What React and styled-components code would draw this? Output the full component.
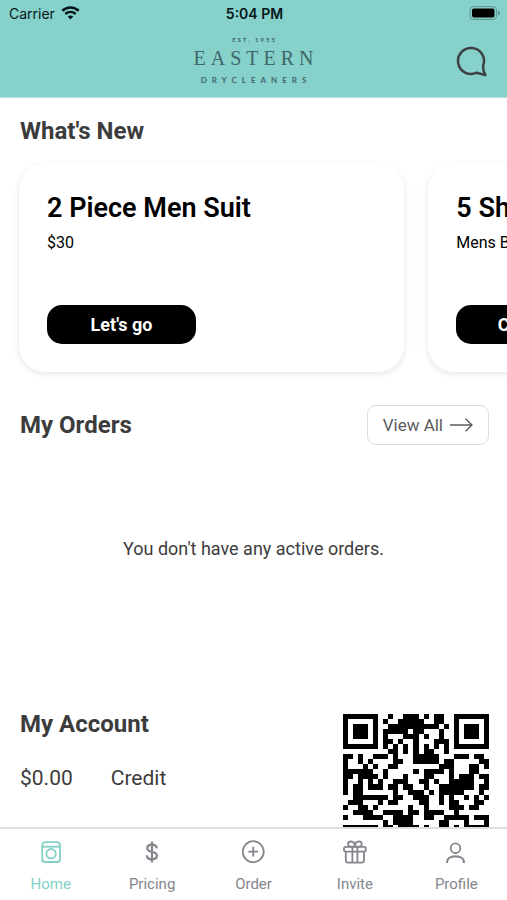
import React from "react";
import styled, { createGlobalStyle } from "styled-components";

const GlobalStyle = createGlobalStyle`
  * {
    box-sizing: border-box;
  }
  body {
    margin: 0;
    background-color: #ffffff;
    font-family: Roboto, "Liberation Sans", sans-serif;
  }
  h1, h2, h3, p {
    margin: 0;
  }
  button {
    font-family: inherit;
    cursor: pointer;
  }
`;

const Screen = styled.div`
  display: flex;
  flex-direction: column;
  height: 100vh;
  overflow: hidden;
`;

const Header = styled.header`
  background-color: #86d1ca;
  border-bottom: 1px solid #b5dfdb;
`;
const StatusBar = styled.div`
  display: grid;
  grid-template-columns: 1fr auto 1fr;
  align-items: center;
  height: 26px;
  padding: 0 7px 0 9px;
  color: #06161a;
  font-family: Inter, "Liberation Sans", sans-serif;
  font-size: 14px;
`;
const Carrier = styled.div`
  display: flex;
  align-items: center;
  gap: 6px;
`;
const Time = styled.div`
  font-weight: 600;
`;
const Battery = styled.svg`
  justify-self: end;
`;
const TitleBar = styled.div`
  display: grid;
  grid-template-columns: 1fr auto 1fr;
  align-items: center;
  height: 71px;
  padding: 0 20px;
`;
const Logo = styled.h1`
  grid-column: 2;
  display: flex;
  flex-direction: column;
  align-items: center;
  color: #3f6668;
  font-weight: normal;
`;
const LogoLine = styled.span`
  font-family: ${({ $serif }) =>
    $serif ? '"Liberation Serif", serif' : "Lato, sans-serif"};
  font-size: ${({ $size }) => $size}px;
  font-weight: ${({ $serif }) => ($serif ? 400 : 700)};
  line-height: ${({ $line }) => $line}px;
  letter-spacing: ${({ $tracking }) => $tracking}px;
  padding-left: ${({ $tracking }) => $tracking}px;
`;
const ChatButton = styled.button`
  justify-self: end;
  display: flex;
  padding: 0;
  border: none;
  background: none;
  color: #3d4145;
`;

const Content = styled.main`
  flex: 1;
  min-height: 0;
  overflow: hidden auto;
  scrollbar-width: none;
  color: #3c3c3c;
`;
const SectionTitle = styled.h2`
  font-size: 24px;
  line-height: 28px;
  font-weight: 700;
`;
const NewsSection = styled.section`
  padding-top: 19px;

  & > ${SectionTitle} {
    padding: 0 20px;
  }
`;
const CardList = styled.div`
  display: flex;
  gap: 24px;
  padding: 19px 19px 33px;
  overflow-x: auto;
  scrollbar-width: none;
`;
const Card = styled.article`
  flex: 0 0 76vw;
  display: flex;
  flex-direction: column;
  align-items: flex-start;
  height: 208px;
  padding: 28px;
  border-radius: 26px;
  background-color: #ffffff;
  box-shadow: 0 2px 6px rgba(0, 0, 0, 0.1);
  color: #000000;
`;
const CardTitle = styled.h3`
  font-size: 27px;
  line-height: 32px;
  font-weight: 600;
`;
const CardText = styled.p`
  margin-top: 9px;
  font-size: 16px;
  line-height: 20px;
`;
const CardButton = styled.button`
  width: 149px;
  height: 39px;
  margin-top: auto;
  border: none;
  border-radius: 15px;
  background-color: #000000;
  color: #ffffff;
  font-size: 18px;
  font-weight: 700;
`;

const OrdersHeader = styled.div`
  display: flex;
  align-items: center;
  justify-content: space-between;
  padding: 0 18px 0 20px;
`;
const ViewAllButton = styled.button`
  display: flex;
  align-items: center;
  gap: 7px;
  height: 40px;
  padding: 0 15px;
  border: 1px solid #dcdcdc;
  border-radius: 9px;
  background-color: #ffffff;
  color: #5c5c5c;
  font-size: 17px;
`;
const EmptyOrders = styled.p`
  padding: 92px 20px 149px;
  font-size: 18px;
  line-height: 24px;
  text-align: center;
`;

const AccountSection = styled.section`
  display: flex;
  align-items: flex-start;
  justify-content: space-between;
  padding: 0 18px 24px 20px;
`;
const Balance = styled.div`
  display: flex;
  gap: 38px;
  margin-top: 28px;
  font-size: 21px;
  line-height: 24px;
`;
const QrBox = styled.div`
  display: flex;
  padding-top: 4px;
`;

const TabBar = styled.nav`
  display: flex;
  height: 73px;
  border-top: 2px solid #dedede;
  background-color: #ffffff;
`;
const Tab = styled.a`
  flex: 1;
  display: flex;
  flex-direction: column;
  align-items: center;
  gap: 10px;
  padding-top: 10px;
  color: ${({ $active }) => ($active ? "#83d0c7" : "#85858d")};
  font-size: 15px;
  line-height: 18px;
  text-decoration: none;
`;

const qrRows = [
  "1111111..1..111.1.11..1111111",
  "1.....1.1..11111..11..1.....1",
  "1.111.1..1111111111.1.1.111.1",
  "1.111.1.11111.11...1..1.111.1",
  "1.111.1.1...111.1..1..1.111.1",
  "1.....1.11.1..1...111.1.....1",
  "1111111.1.1.1.1.1.1.1.1111111",
  ".........11.1.1.11..1........",
  "11.1..111.1...11111...111.11.",
  "1..1.1....11..11111.11.....11",
  "1...1.1..11........111...11.1",
  "111111..1.....1.1111.1...11..",
  "11.1111.1...1...11...1.111.11",
  "1..1.1.1..111..11.1..11111..1",
  "1.11.111.11.11..1..1111111.11",
  "1.11......1..111.1.11111...1.",
  "..1111111.11..111..1.1..1.1.1",
  ".111...1.11....11..1.11...11.",
  "1..11.1......1..1....111.11..",
  "..1111..1111.11.1111..1......",
  "1...1111..1111..11..11111.111",
  "........1.1111.....11...1...1",
  "1111111.11.1111.1..11.1.11111",
];

const QrCode = () => (
  <svg
    width="146"
    height="146"
    viewBox="0 0 29 29"
    shapeRendering="crispEdges"
    role="img"
    aria-label="Account QR code"
  >
    {qrRows.map((row, y) =>
      [...row].map((cell, x) =>
        cell === "1" ? (
          <rect key={`${x}-${y}`} x={x} y={y} width="1" height="1" />
        ) : null
      )
    )}
  </svg>
);

const WifiIcon = () => (
  <svg width="19" height="14" viewBox="0 0 19 14" fill="none" stroke="#06161a">
    <path d="M1.3 4.8C6 .4 13 .4 17.7 4.8" strokeWidth="2.6" />
    <path d="M4.3 8C7.3 5.2 11.7 5.2 14.7 8" strokeWidth="2.4" />
    <path d="M9.5 13.4L6.7 10.5C8.3 9.1 10.7 9.1 12.3 10.5Z" fill="#06161a" stroke="none" />
  </svg>
);

const BatteryIcon = () => (
  <Battery width="31" height="14" viewBox="0 0 31 14">
    <rect x="1" y=".6" width="26.5" height="12.8" rx="3.6" fill="none" stroke="#5b918d" />
    <rect x="3" y="2.6" width="22.5" height="8.8" rx="1.8" />
    <path d="M29 4.6Q31 5.6 31 7T29 9.4Z" fill="#5b918d" />
  </Battery>
);

const ChatIcon = () => (
  <svg
    width="31"
    height="31"
    viewBox="0 0 31 31"
    fill="none"
    stroke="currentColor"
    strokeWidth="2.5"
    strokeLinejoin="round"
  >
    <path d="M27.2 19.5A13 13 0 1 0 20.6 26.7L29.3 29.1Q26.7 24.5 27.2 19.5Z" />
  </svg>
);

const ArrowIcon = () => (
  <svg width="23" height="14" viewBox="0 0 23 14" fill="none" stroke="currentColor" strokeWidth="1.3">
    <path d="M0 7H22M15.5 .7L22 7L15.5 13.3" />
  </svg>
);

const iconPaths = {
  home: (
    <>
      <rect x="3.2" y="2.2" width="17.8" height="19.8" rx="3" />
      <path d="M3.2 6.7H21" />
      <circle cx="12.1" cy="13.7" r="4.7" />
    </>
  ),
  pricing: (
    <path
      d="M12 1.5V22.5M16.8 8.4C16.7 5.9 14.8 4.6 12 4.6S7.2 6 7.2 8.2C7.2 13.3 16.9 10.2 16.9 15.6C16.9 18 14.9 19.4 12 19.4S6.9 18 6.9 15.3"
      strokeWidth="2.2"
    />
  ),
  order: (
    <>
      <circle cx="11.2" cy="11.7" r="10.5" />
      <path d="M11.2 6.8V16.6M6.3 11.7H16.1" />
    </>
  ),
  invite: (
    <>
      <rect x="1" y="6.9" width="21.8" height="4.7" rx="1.6" />
      <path d="M2.8 11.6V20.2Q2.8 22.6 5.2 22.6H18.6Q21 22.6 21 20.2V11.6M9.4 6.9V22.6M14.4 6.9V22.6" />
      <path d="M11.9 6.7H8.5C3.6 6.7 4.3 1.5 7.9 1.5C10.4 1.5 11.9 3.6 11.9 6.7ZM11.9 6.7H15.3C20.2 6.7 19.5 1.5 15.9 1.5C13.4 1.5 11.9 3.6 11.9 6.7Z" />
    </>
  ),
  profile: (
    <>
      <circle cx="11.5" cy="8.2" r="4.8" />
      <path d="M3.1 23V21.8C3.1 18.4 6.5 16.4 11.5 16.4S19.9 18.4 19.9 21.8V23" strokeWidth="2.1" />
    </>
  ),
};

const TabIcon = ({ name }) => (
  <svg
    width="24"
    height="26"
    viewBox="0 -1 24 26"
    fill="none"
    stroke="currentColor"
    strokeWidth="1.8"
    aria-hidden="true"
  >
    {iconPaths[name]}
  </svg>
);

const news = [
  { title: "2 Piece Men Suit", text: "$30", action: "Let's go" },
  { title: "5 Shirts", text: "Mens Business", action: "Check it" },
];

const tabs = [
  { name: "home", label: "Home" },
  { name: "pricing", label: "Pricing" },
  { name: "order", label: "Order" },
  { name: "invite", label: "Invite" },
  { name: "profile", label: "Profile" },
];

const App = () => {
  return (
    <Screen>
      <GlobalStyle />
      <Header>
        <StatusBar>
          <Carrier>
            Carrier
            <WifiIcon />
          </Carrier>
          <Time>5:04 PM</Time>
          <BatteryIcon />
        </StatusBar>
        <TitleBar>
          <Logo>
            <LogoLine $size={6} $line={10} $tracking={2}>
              EST. 1955
            </LogoLine>
            <LogoLine $serif $size={20} $line={26} $tracking={5}>
              EASTERN
            </LogoLine>
            <LogoLine $size={8} $line={18} $tracking={5}>
              DRYCLEANERS
            </LogoLine>
          </Logo>
          <ChatButton aria-label="Chat">
            <ChatIcon />
          </ChatButton>
        </TitleBar>
      </Header>

      <Content>
        <NewsSection>
          <SectionTitle>What's New</SectionTitle>
          <CardList>
            {news.map((item) => (
              <Card key={item.title}>
                <CardTitle>{item.title}</CardTitle>
                <CardText>{item.text}</CardText>
                <CardButton>{item.action}</CardButton>
              </Card>
            ))}
          </CardList>
        </NewsSection>

        <section>
          <OrdersHeader>
            <SectionTitle>My Orders</SectionTitle>
            <ViewAllButton>
              View All
              <ArrowIcon />
            </ViewAllButton>
          </OrdersHeader>
          <EmptyOrders>You don't have any active orders.</EmptyOrders>
        </section>

        <AccountSection>
          <div>
            <SectionTitle>My Account</SectionTitle>
            <Balance>
              <span>$0.00</span>
              <span>Credit</span>
            </Balance>
          </div>
          <QrBox>
            <QrCode />
          </QrBox>
        </AccountSection>
      </Content>

      <TabBar>
        {tabs.map((tab) => (
          <Tab key={tab.name} href={`#${tab.name}`} $active={tab.name === "home"}>
            <TabIcon name={tab.name} />
            {tab.label}
          </Tab>
        ))}
      </TabBar>
    </Screen>
  );
};

export default App;
